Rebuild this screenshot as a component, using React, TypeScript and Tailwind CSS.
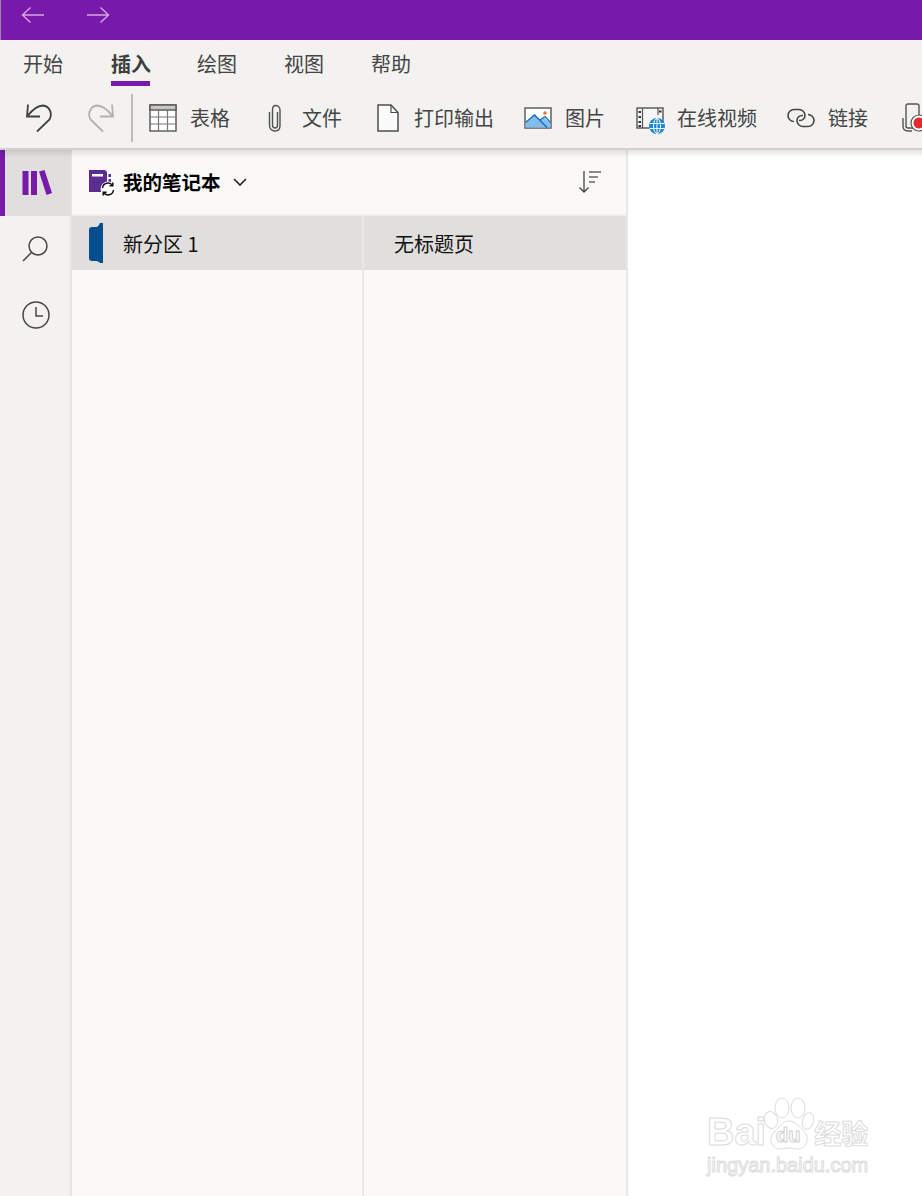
const font = { fontFamily: '"Noto Sans CJK SC", "Liberation Sans", sans-serif' };

function ArrowIcon({ flip }: { flip?: boolean }) {
  return (
    <svg width="24" height="18" viewBox="0 0 24 18" fill="none" stroke="#d7a6dc" strokeWidth="1.4" className={flip ? "rotate-180" : ""}>
      <path d="M1.5 9H23M9.5 1.5 1.5 9l8 7.5" />
    </svg>
  );
}

function UndoIcon({ redo }: { redo?: boolean }) {
  return (
    <svg width="28" height="30" viewBox="0 0 28 30" fill="none" stroke={redo ? "#b3b1af" : "#404040"} strokeWidth="1.8" className={redo ? "-scale-x-100" : ""}>
      <path d="M3 1.500 2 13.500h13M2.500 13C8 6 13 2.500 18 2.500 24 3 28 10 24.500 16.500L12 28.500" />
    </svg>
  );
}

function TableIcon() {
  return (
    <svg width="28" height="28" viewBox="0 0 28 28" fill="none">
      <rect x="1" y="1" width="26" height="26" fill="#fff" stroke="#555" strokeWidth="1.4" />
      <rect x="1" y="1" width="26" height="5" fill="#c8c6c4" stroke="#555" strokeWidth="1.4" />
      <path d="M1 13h26M1 20h26M9.500 6v21M18.500 6v21" stroke="#777" strokeWidth="1.2" />
    </svg>
  );
}

function ClipIcon() {
  return (
    <svg width="16" height="28" viewBox="0 0 16 28" fill="none" stroke="#505050" strokeWidth="1.4">
      <path d="M10.500 8v13c0 2-1 3-2.500 3s-2.500-1-2.500-3V6c0-3 1-4.500 3-4.500S13 3 13 6v15.500c0 3.500-2 5.500-5 5.500s-5.500-2-5.500-5.500V8" />
    </svg>
  );
}

function FileIcon() {
  return (
    <svg width="24" height="28" viewBox="0 0 24 28" fill="none">
      <path d="M2 1h13l7 7.500V27H2z" fill="#fbfbfb" stroke="#4d4d4d" strokeWidth="1.500" />
      <path d="M15 1v7.500h7" stroke="#4d4d4d" strokeWidth="1.200" />
    </svg>
  );
}

function PictureIcon() {
  return (
    <svg width="28" height="22" viewBox="0 0 28 22" fill="none">
      <rect x="1" y="1" width="26" height="20" fill="#fff" stroke="#555" strokeWidth="1.400" />
      <path d="M1.500 16 11 7.500 20.500 20.500H1.500z" fill="#83bdee" />
      <path d="M15 14l5-3.500 6.500 6v4H20z" fill="#83bdee" />
      <path d="M1.500 15.500 10.500 8l12.500 12.500M16 13l5-3.500 5.500 6" stroke="#0f6cbd" strokeWidth="1.300" />
      <circle cx="21" cy="6" r="1.800" fill="#e97a1c" />
    </svg>
  );
}

function VideoIcon() {
  return (
    <svg width="30" height="32" viewBox="0 0 30 32" fill="none" className="shrink-0">
      <rect x="1" y="6" width="26" height="20" fill="#f6f6f6" stroke="#555" strokeWidth="1.400" />
      <path d="M6.500 6v20M22 6v7" stroke="#555" strokeWidth="1.200" />
      <path d="M2.500 10h2.500M2.500 15h2.500M2.500 20h2.500M2.500 24h2.500M23 9.500h2.500" stroke="#333" strokeWidth="2" />
      <circle cx="21" cy="24" r="8" fill="#1b87d6" />
      <ellipse cx="21" cy="24" rx="3.500" ry="7.500" stroke="#fff" strokeWidth="1" />
      <path d="M13.500 21.500h15M13.500 26.500h15M21 16v16" stroke="#fff" strokeWidth="1" />
    </svg>
  );
}

function LinkIcon() {
  return (
    <svg width="28" height="20" viewBox="0 0 28 20" fill="none" stroke="#454545" strokeWidth="1.600">
      <path d="M7 13.500A6 6 0 0 1 7 1.500h5a6 6 0 0 1 6 6 5 5 0 0 1-5 5h-1" />
      <path d="M21 6.500a6 6 0 0 1 0 12h-5a6 6 0 0 1-6-6 5 5 0 0 1 5-5h1" />
    </svg>
  );
}

function RecordIcon() {
  return (
    <svg width="30" height="32" viewBox="0 0 30 32" fill="none" className="shrink-0">
      <rect x="5" y="2" width="13" height="24" rx="2" stroke="#555" strokeWidth="1.400" />
      <path d="M2 16v8c0 3 2 5 5 5h4" stroke="#555" strokeWidth="1.400" />
      <circle cx="18" cy="21" r="8" fill="#fff" stroke="#555" strokeWidth="1.200" />
      <circle cx="18" cy="21" r="5.500" fill="#e8282b" />
    </svg>
  );
}

function ToolItem({ icon, label, textClass }: { icon: React.ReactNode; label: string; textClass: string }) {
  return (
    <div className="flex h-full items-center">
      <div className="flex w-[28px] shrink-0 items-center justify-center">{icon}</div>
      <span className={`whitespace-nowrap text-[20px] leading-none text-[#444] ${textClass}`}>{label}</span>
    </div>
  );
}

function Watermark() {
  const outline = "text-white [-webkit-text-stroke:1px_#dcdcdc]";
  return (
    <div className="pointer-events-none absolute bottom-[20px] left-[707px] flex w-[170px] flex-col" style={{ fontFamily: '"Liberation Sans", "Noto Sans CJK SC", sans-serif' }}>
      <div className="flex h-[54px] items-end">
        <span className={`text-[38px] font-bold leading-[38px] ${outline}`}>Bai</span>
        <svg width="50" height="54" viewBox="0 0 50 54" fill="none" stroke="#dcdcdc" strokeWidth="1" className="-ml-[2px] shrink-0">
          <ellipse cx="7" cy="23" rx="6.500" ry="8.500" fill="#fff" transform="rotate(-15 7 23)" />
          <ellipse cx="18" cy="11" rx="7" ry="10" fill="#fff" />
          <ellipse cx="34" cy="11" rx="7" ry="10" fill="#fff" />
          <ellipse cx="44" cy="24" rx="5.500" ry="8.500" fill="#fff" transform="rotate(15 44 24)" />
          <path d="M25 24c7 0 10 6 15 10 6 6 3 18-6 18-4 0-6-1-9-1s-5 1-9 1c-9 0-12-11-6-17 5-4 8-11 15-11z" fill="#fff" />
          <text x="12" y="45" fontSize="20" fontWeight="700" fill="#fff" stroke="#d0d0d0">du</text>
        </svg>
        <span className={`whitespace-nowrap text-[27px] font-bold leading-[36px] ${outline}`} style={font}>经验</span>
      </div>
      <span className={`mt-[3px] whitespace-nowrap text-[20px] leading-[22px] ${outline}`}>jingyan.baidu.com</span>
    </div>
  );
}

export default function App() {
  return (
    <div className="relative flex h-[1196px] w-[922px] flex-col overflow-hidden bg-white" style={font}>
      <div className="flex h-[40px] shrink-0 items-center gap-[41px] border-l border-[#9a8aa0] bg-[#7719aa] pb-[10px] pl-[20px]">
        <ArrowIcon />
        <ArrowIcon flip />
      </div>

      <div className="z-10 flex h-[110px] shrink-0 flex-col overflow-hidden border-b-2 border-[#d2d0ce] bg-[#f3f2f1]">
        <div className="flex h-[50px] shrink-0 pl-[23px] text-[20px] text-[#444]">
          <div className="flex w-[88px] items-start pt-[9px] leading-[30px]">开始</div>
          <div className="flex w-[86px] flex-col items-start pt-[9px] leading-[30px]">
            <span className="font-bold text-[#3d3d3d]">插入</span>
            <span className="mt-[2px] h-[5px] w-[39px] bg-[#7719aa]" />
          </div>
          <div className="flex w-[87px] items-start pt-[9px] leading-[30px]">绘图</div>
          <div className="flex w-[87px] items-start pt-[9px] leading-[30px]">视图</div>
          <div className="flex w-[87px] items-start pt-[9px] leading-[30px]">帮助</div>
        </div>
        <div className="flex h-[56px] shrink-0 items-center">
          <div className="ml-[25px] shrink-0"><UndoIcon /></div>
          <div className="ml-[34px] shrink-0"><UndoIcon redo /></div>
          <div className="ml-[16px] h-[48px] w-[2px] shrink-0 bg-[#bdbcba]" />
          <div className="ml-[16px] h-full"><ToolItem icon={<TableIcon />} label="表格" textClass="ml-[13px]" /></div>
          <div className="ml-[31px] h-full"><ToolItem icon={<ClipIcon />} label="文件" textClass="ml-[13px]" /></div>
          <div className="ml-[32px] h-full"><ToolItem icon={<FileIcon />} label="打印输出" textClass="ml-[12px]" /></div>
          <div className="ml-[30px] h-full"><ToolItem icon={<PictureIcon />} label="图片" textClass="ml-[13px]" /></div>
          <div className="ml-[32px] h-full"><ToolItem icon={<VideoIcon />} label="在线视频" textClass="ml-[12px]" /></div>
          <div className="ml-[30px] h-full"><ToolItem icon={<LinkIcon />} label="链接" textClass="ml-[13px]" /></div>
          <div className="ml-[33px] shrink-0"><RecordIcon /></div>
        </div>
      </div>

      <div className="relative flex min-h-0 flex-1">
        <div className="absolute inset-x-0 top-0 h-[8px] bg-gradient-to-b from-black/10 to-transparent" />
        <div className="flex w-[72px] shrink-0 flex-col border-r-2 border-[#e6e5e4] bg-[#f3f2f1]">
          <div className="flex h-[66px] w-[71px] items-center justify-center border-l-[5px] border-[#7719aa] bg-[#e1dfdd] pr-[3px]">
            <svg width="30" height="26" viewBox="0 0 30 26" fill="#7719aa">
              <rect x="0.500" y="1" width="6" height="24" />
              <rect x="9" y="1" width="6" height="24" />
              <path d="M17 1.500 22.500 0 30 23l-5.500 2z" />
            </svg>
          </div>
          <div className="flex h-[66px] items-center justify-center">
            <svg width="28" height="28" viewBox="0 0 28 28" fill="none" stroke="#484848" strokeWidth="1.500">
              <circle cx="17" cy="11" r="9" />
              <path d="M10.500 17.500 2 26" />
            </svg>
          </div>
          <div className="flex h-[66px] items-center justify-center pl-[1px]">
            <svg width="28" height="28" viewBox="0 0 28 28" fill="none" stroke="#484848" strokeWidth="1.500">
              <circle cx="14" cy="14" r="13" />
              <path d="M14 6v9h7" />
            </svg>
          </div>
        </div>

        <div className="flex w-[556px] shrink-0 flex-col border-r-2 border-[#e9e8e7] bg-[#faf9f8]">
          <div className="flex h-[66px] shrink-0 items-center border-b-2 border-[#f0efee] pl-[17px] pr-[24px]">
            <svg width="28" height="30" viewBox="0 0 28 30" fill="none" className="shrink-0">
              <path d="M0 3h15a3 3 0 0 1 3 3v19H0z" fill="#5c2d91" />
              <rect x="3" y="7" width="11" height="2.500" fill="#fff" />
              <rect x="19.500" y="7" width="2.500" height="3" fill="#5c2d91" />
              <rect x="19.500" y="12" width="2.500" height="3" fill="#5c2d91" />
              <circle cx="19" cy="22" r="7.500" fill="#fff" />
              <path d="M13.500 21a5.500 5.500 0 0 1 10-2.500M24.500 23a5.500 5.500 0 0 1-10 2.500M23.800 15.500v3.300h-3.300M14.200 28.500v-3.300h3.300" stroke="#111" strokeWidth="1.500" />
            </svg>
            <span className="ml-[6px] text-[19.500px] font-bold leading-none text-black">我的笔记本</span>
            <svg width="14" height="8" viewBox="0 0 14 8" fill="none" stroke="#222" strokeWidth="1.600" className="ml-[12px]">
              <path d="M1 1l6 6 6-6" />
            </svg>
            <svg width="24" height="24" viewBox="0 0 24 24" fill="none" stroke="#666" strokeWidth="1.300" className="ml-auto">
              <path d="M6 1v21M1.500 17.500 6 22l4.500-4.500" stroke="#444" />
              <path d="M11 2h12M11 7h9M11 12h6" />
            </svg>
          </div>
          <div className="flex min-h-0 flex-1">
            <div className="w-[292px] shrink-0 border-r-2 border-[#e9e8e7]">
              <div className="flex h-[54px] items-center bg-[#e1dfdd] pl-[17px]">
                <svg width="14" height="40" viewBox="0 0 14 40" className="shrink-0">
                  <path d="M11 0h3v40h-3c-1-1-2-2-4-2H3c-2 0-3-1-3-3V7c0-2 1-3 3-3h4c2 0 3-2 4-4z" fill="#004e8c" />
                </svg>
                <span className="ml-[20px] pt-[1px] text-[20px] leading-none text-[#111]">新分区 1</span>
              </div>
            </div>
            <div className="min-w-0 flex-1">
              <div className="flex h-[54px] items-center bg-[#e1dfdd] pl-[30px] pt-[1px] text-[20px] leading-none text-[#111]">无标题页</div>
            </div>
          </div>
        </div>

        <div className="flex-1 bg-white" />
      </div>

      <Watermark />
    </div>
  );
}
